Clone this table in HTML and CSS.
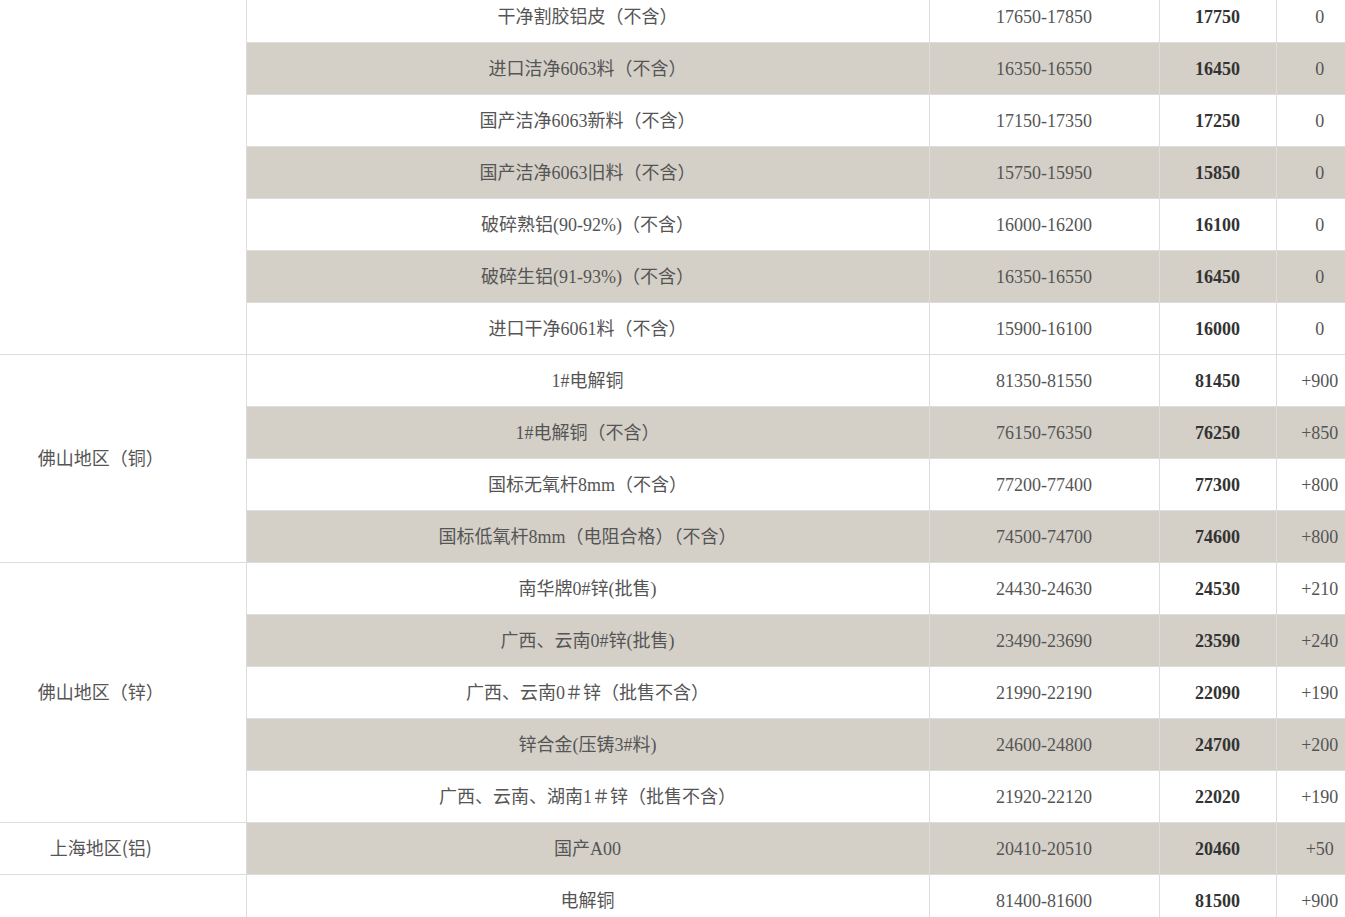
FILE: index.html
```html
<!DOCTYPE html>
<html lang="zh-CN">
<head>
<meta charset="utf-8">
<title>价格表</title>
<link rel="stylesheet" href="styles.css">
</head>
<body>
<table class="price-table">
  <colgroup>
    <col class="c-region"><col class="c-name"><col class="c-range"><col class="c-price"><col class="c-change">
  </colgroup>
  <tbody>
    <tr><td class="region" rowspan="7"></td><td class="name">干净割胶铝皮（不含）</td><td class="range">17650-17850</td><td class="price">17750</td><td class="change">0</td></tr>
    <tr class="alt"><td class="name">进口洁净6063料（不含）</td><td class="range">16350-16550</td><td class="price">16450</td><td class="change">0</td></tr>
    <tr><td class="name">国产洁净6063新料（不含）</td><td class="range">17150-17350</td><td class="price">17250</td><td class="change">0</td></tr>
    <tr class="alt"><td class="name">国产洁净6063旧料（不含）</td><td class="range">15750-15950</td><td class="price">15850</td><td class="change">0</td></tr>
    <tr><td class="name">破碎熟铝(90-92%)（不含）</td><td class="range">16000-16200</td><td class="price">16100</td><td class="change">0</td></tr>
    <tr class="alt"><td class="name">破碎生铝(91-93%)（不含）</td><td class="range">16350-16550</td><td class="price">16450</td><td class="change">0</td></tr>
    <tr><td class="name">进口干净6061料（不含）</td><td class="range">15900-16100</td><td class="price">16000</td><td class="change">0</td></tr>

    <tr><td class="region" rowspan="4">佛山地区（铜）</td><td class="name">1#电解铜</td><td class="range">81350-81550</td><td class="price">81450</td><td class="change">+900</td></tr>
    <tr class="alt"><td class="name">1#电解铜（不含）</td><td class="range">76150-76350</td><td class="price">76250</td><td class="change">+850</td></tr>
    <tr><td class="name">国标无氧杆8mm（不含）</td><td class="range">77200-77400</td><td class="price">77300</td><td class="change">+800</td></tr>
    <tr class="alt"><td class="name">国标低氧杆8mm（电阻合格）（不含）</td><td class="range">74500-74700</td><td class="price">74600</td><td class="change">+800</td></tr>

    <tr><td class="region" rowspan="5">佛山地区（锌）</td><td class="name">南华牌0#锌(批售)</td><td class="range">24430-24630</td><td class="price">24530</td><td class="change">+210</td></tr>
    <tr class="alt"><td class="name">广西、云南0#锌(批售)</td><td class="range">23490-23690</td><td class="price">23590</td><td class="change">+240</td></tr>
    <tr><td class="name">广西、云南0＃锌（批售不含）</td><td class="range">21990-22190</td><td class="price">22090</td><td class="change">+190</td></tr>
    <tr class="alt"><td class="name">锌合金(压铸3#料)</td><td class="range">24600-24800</td><td class="price">24700</td><td class="change">+200</td></tr>
    <tr><td class="name">广西、云南、湖南1＃锌（批售不含）</td><td class="range">21920-22120</td><td class="price">22020</td><td class="change">+190</td></tr>

    <tr class="alt"><td class="region">上海地区(铝)</td><td class="name">国产A00</td><td class="range">20410-20510</td><td class="price">20460</td><td class="change">+50</td></tr>

    <tr><td class="region"></td><td class="name">电解铜</td><td class="range">81400-81600</td><td class="price">81500</td><td class="change">+900</td></tr>
  </tbody>
</table>
</body>
</html>
```

FILE: styles.css
```css
html, body {
  margin: 0;
  padding: 0;
  background: #fff;
}

body {
  overflow: hidden;
  font-family: "Liberation Serif", "Noto Sans CJK SC", serif;
  font-size: 18px;
  color: #555;
}

.price-table {
  width: 1345px;
  margin-top: -9px;
  border-collapse: collapse;
  table-layout: fixed;
}

.c-region { width: 246px; }
.c-name { width: 683px; }
.c-range { width: 230px; }
.c-price { width: 117px; }
.c-change { width: 69px; }

.price-table td {
  height: 51px;
  padding: 0;
  text-align: center;
  vertical-align: middle;
  border-bottom: 1px solid #ddd;
  border-right: 1px solid #ddd;
  line-height: 20px;
  white-space: nowrap;
}

.price-table td.region {
  height: 47px;
  background: #fff;
  padding: 0 44px 4px 0;
  font-family: "Noto Sans CJK SC", sans-serif;
}

.price-table td.name {
  font-family: "Liberation Serif", "Noto Sans CJK SC", sans-serif;
}

.price-table tr.alt td:not(.region) {
  background: #d4d0c8;
}

.price-table td.price {
  font-weight: bold;
  color: #333;
}

.price-table td.change {
  border-right: none;
  padding-left: 18px;
}
```
